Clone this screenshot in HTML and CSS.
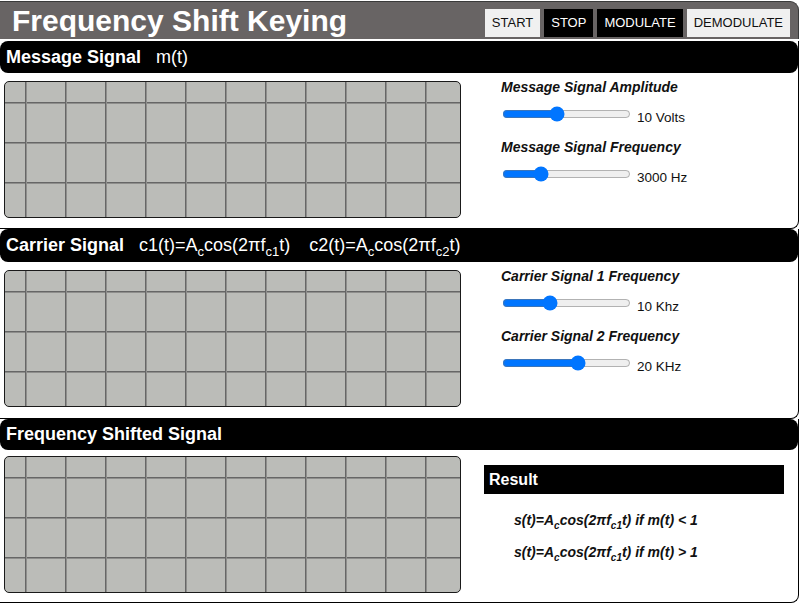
FILE: index.html
```html
<!DOCTYPE html>
<html>
<head>
<meta charset="utf-8">
<title>Frequency Shift Keying</title>
<link rel="stylesheet" href="styles.css">
</head>
<body>
<div class="app">
  <header class="topbar">
    <h1 class="title">Frequency Shift Keying</h1>
    <div class="buttons">
      <button class="btn btn-light">START</button>
      <button class="btn btn-dark">STOP</button>
      <button class="btn btn-dark">MODULATE</button>
      <button class="btn btn-light">DEMODULATE</button>
    </div>
  </header>

  <section class="panel panel-msg">
    <div class="bar"><b>Message Signal</b><span class="eq">m(t)</span></div>
    <div class="body">
      <div class="graph"></div>
      <div class="controls">
        <div class="ctrl">
          <div class="label">Message Signal Amplitude</div>
          <div class="row"><input type="range" min="0" max="100" value="42"><span class="val">10 Volts</span></div>
        </div>
        <div class="ctrl">
          <div class="label">Message Signal Frequency</div>
          <div class="row"><input type="range" min="0" max="100" value="27"><span class="val">3000 Hz</span></div>
        </div>
      </div>
    </div>
  </section>

  <section class="panel panel-car">
    <div class="bar"><b>Carrier Signal</b><span class="eq">c1(t)=A<sub>c</sub>cos(2πf<sub>c1</sub>t)</span><span class="eq eq2">c2(t)=A<sub>c</sub>cos(2πf<sub>c2</sub>t)</span></div>
    <div class="body">
      <div class="graph"></div>
      <div class="controls">
        <div class="ctrl">
          <div class="label">Carrier Signal 1 Frequency</div>
          <div class="row"><input type="range" min="0" max="100" value="35"><span class="val">10 Khz</span></div>
        </div>
        <div class="ctrl">
          <div class="label">Carrier Signal 2 Frequency</div>
          <div class="row"><input type="range" min="0" max="100" value="60"><span class="val">20 KHz</span></div>
        </div>
      </div>
    </div>
  </section>

  <section class="panel panel-fsk">
    <div class="bar"><b>Frequency Shifted Signal</b></div>
    <div class="body">
      <div class="graph"></div>
      <div class="result">
        <div class="result-head">Result</div>
        <div class="formula">s(t)=A<sub>c</sub>cos(2πf<sub>c1</sub>t) if m(t) &lt; 1</div>
        <div class="formula">s(t)=A<sub>c</sub>cos(2πf<sub>c1</sub>t) if m(t) &gt; 1</div>
      </div>
    </div>
  </section>
</div>
</body>
</html>
```

FILE: styles.css
```css
html, body {
  margin: 0;
  padding: 0;
  background: #fff;
}
body {
  font-family: "Liberation Sans", Arial, sans-serif;
  color: #000;
}
.app {
  width: 799px;
}
.topbar {
  margin-top: 1px;
  height: 37px;
  background: #686464;
  border-top: 1px solid #3a3a3a;
  border-right: 1px solid #3a3a3a;
  border-top-right-radius: 9px;
  display: flex;
  align-items: center;
  justify-content: space-between;
}
.title {
  margin: 0 0 0 12px;
  font-size: 30px;
  font-weight: bold;
  color: #fff;
  line-height: 34px;
}
.buttons {
  display: flex;
  gap: 4px;
  margin-right: 8px;
  margin-top: 4px;
}
.btn {
  font-family: "Liberation Sans", Arial, sans-serif;
  font-size: 13px;
  height: 28px;
  padding: 0 7px;
  border: 0;
  border-radius: 0;
  margin: 0;
}
.btn-light {
  background: #f0f0f0;
  color: #111;
}
.btn-dark {
  background: #000;
  color: #fff;
}
.panel {
  border-right: 1px solid #000;
  border-bottom: 1px solid #000;
  border-bottom-right-radius: 8px;
}
.panel-msg {
  margin-top: 2px;
}
.bar {
  background: #000;
  color: #fff;
  border-radius: 8px;
  height: 32px;
  display: flex;
  align-items: center;
  padding-left: 6px;
  font-size: 18px;
  white-space: nowrap;
}
.panel-car .bar {
  height: 33px;
}
.panel-fsk .bar {
  height: 31px;
}
.bar .eq {
  margin-left: 15px;
}
.bar .eq2 {
  margin-left: 19px;
}
.bar sub {
  font-size: 13px;
  vertical-align: -5px;
  line-height: 0;
}
.body {
  display: flex;
  align-items: flex-start;
  padding: 0 0 10px 4px;
}
.panel-car .body {
  padding-bottom: 11px;
}
.panel-fsk .body {
  padding-bottom: 9px;
}
.graph {
  margin-top: 8px;
  width: 455px;
  height: 135px;
  border: 1px solid #1a1a1a;
  border-radius: 5px;
  background-color: #bbbcb8;
  background-image:
    linear-gradient(to right, #666 0, #666 1px, #8e8e8c 1px, #8e8e8c 2px, transparent 2px),
    linear-gradient(to bottom, #666 0, #666 1px, #8e8e8c 1px, #8e8e8c 2px, transparent 2px);
  background-size: 40px 40px;
  background-position: 20px 20px;
  flex: none;
}
.panel-fsk .graph {
  margin-top: 6px;
}
.controls {
  margin-left: 39px;
  padding-top: 6px;
}
.ctrl + .ctrl {
  margin-top: 15px;
}
.label {
  font-size: 14px;
  font-weight: bold;
  font-style: italic;
  line-height: 16px;
  color: #111;
  padding-left: 1px;
}
.row {
  display: flex;
  align-items: center;
  margin-top: 9px;
  height: 20px;
}
.row input {
  width: 129px;
  margin: 0 0 0 2px;
  height: 16px;
}
.val {
  font-size: 13.5px;
  margin-left: 6px;
  padding-top: 6px;
  color: #111;
}
.result {
  margin-left: 23px;
  padding-top: 15px;
}
.result-head {
  width: 295px;
  height: 29px;
  line-height: 29px;
  padding-left: 5px;
  background: #000;
  color: #fff;
  font-size: 16px;
  font-weight: bold;
}
.formula {
  font-size: 14px;
  font-weight: bold;
  font-style: italic;
  line-height: 16px;
  padding-left: 30px;
  margin-top: 18px;
  color: #111;
}
.formula + .formula {
  margin-top: 16px;
}
.formula sub {
  font-size: 10px;
  vertical-align: -4px;
  line-height: 0;
}
```
